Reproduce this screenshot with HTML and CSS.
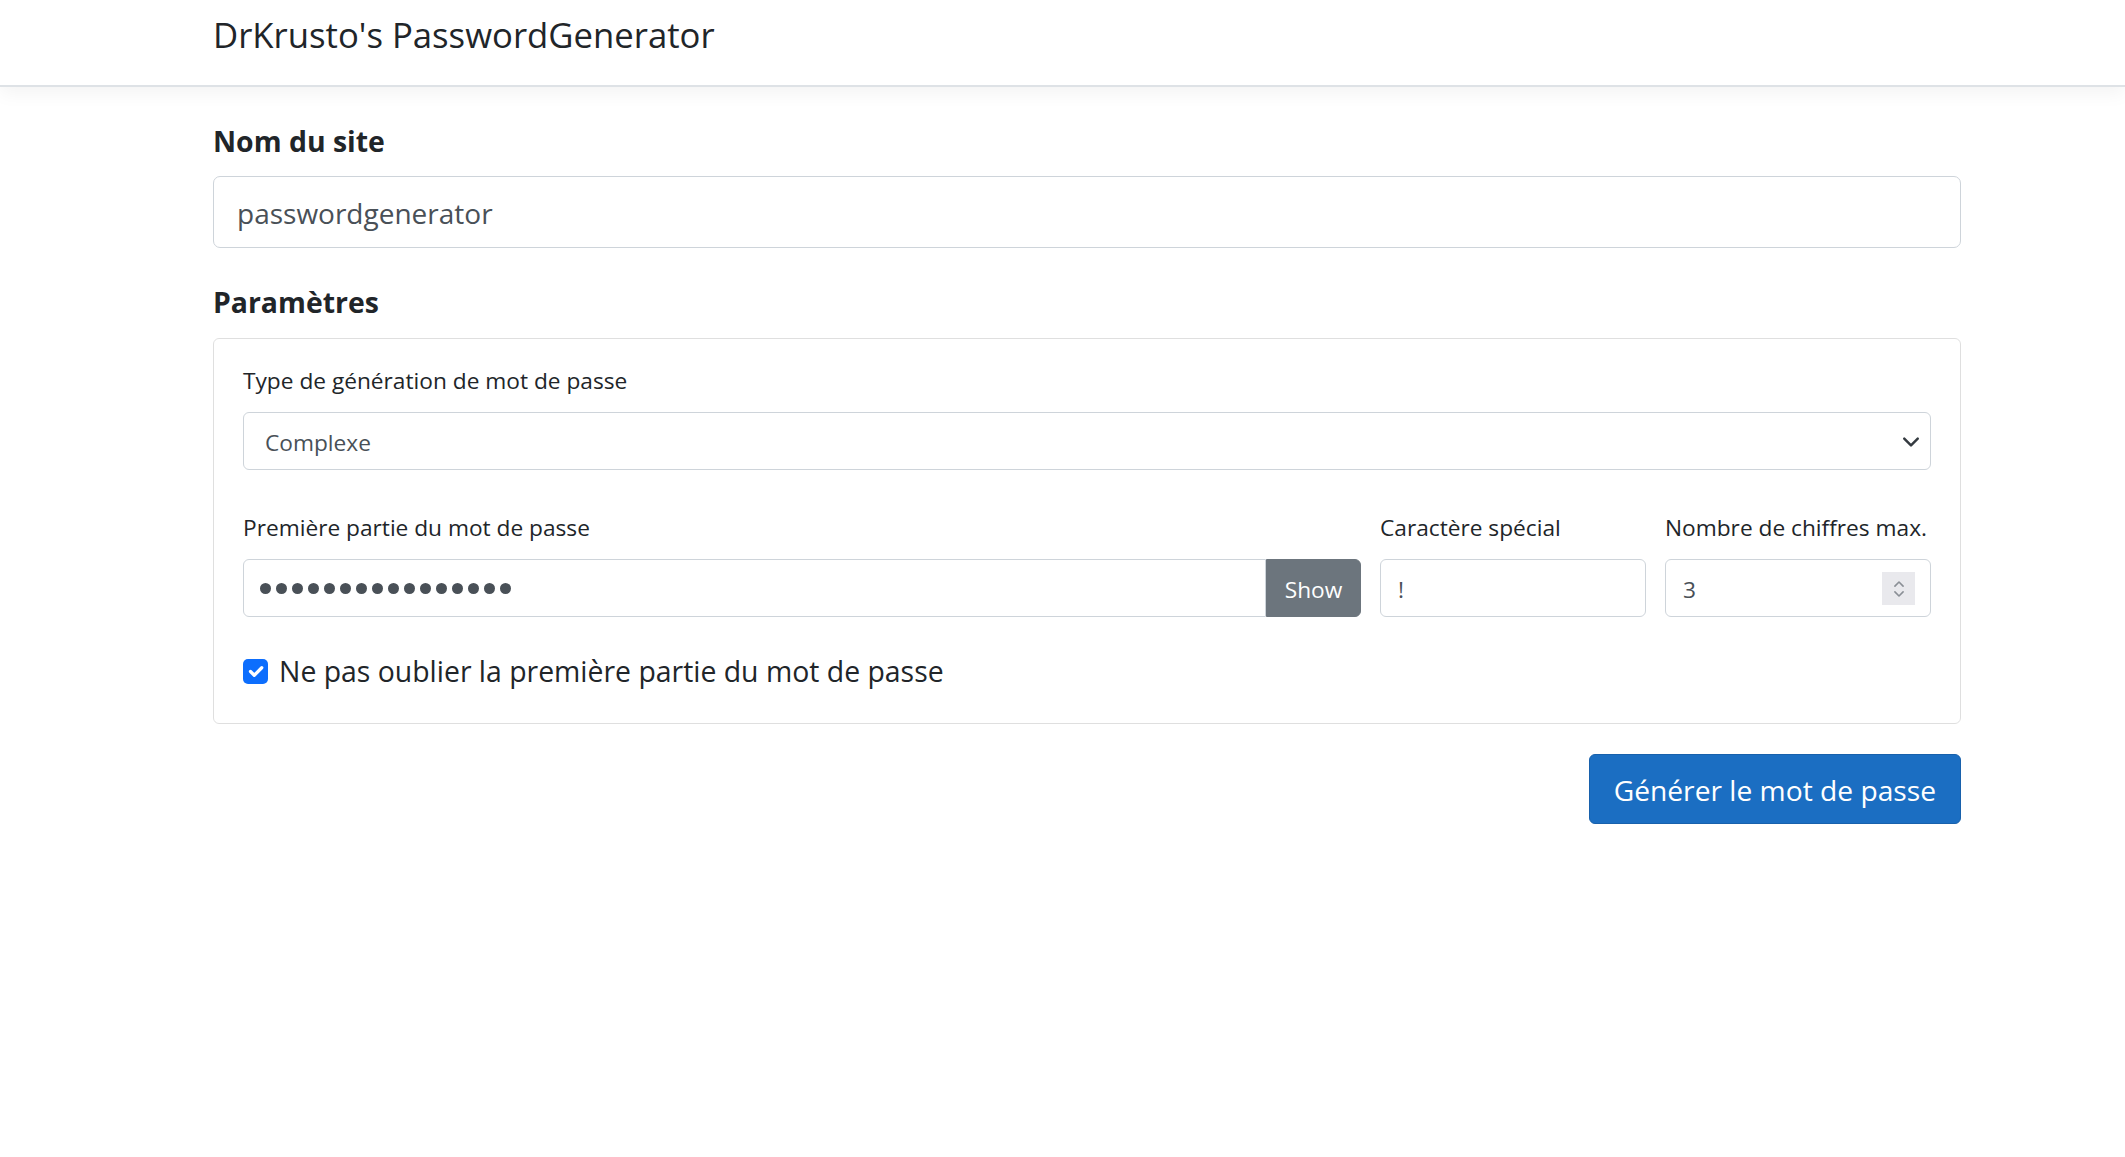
FILE: index.html
```html
<!DOCTYPE html>
<html lang="fr">
<head>
<meta charset="utf-8">
<title>PasswordGenerator</title>
<link rel="stylesheet" href="styles.css">
</head>
<body>
<header class="topbar">
  <div class="brand">DrKrusto's PasswordGenerator</div>
</header>
<main class="page">
  <h5 class="section-title">Nom du site</h5>
  <input class="field field-lg" type="text" value="passwordgenerator">
  <h5 class="section-title section-gap">Paramètres</h5>
  <div class="card">
    <label class="label">Type de génération de mot de passe</label>
    <div class="select-wrap">
      <select class="field field-md select">
        <option>Complexe</option>
      </select>
      <svg class="select-arrow" viewBox="0 0 16 16" width="18" height="18"><path d="M2 5l6 6 6-6" fill="none" stroke="#343a40" stroke-width="2.2" stroke-linecap="round" stroke-linejoin="round"/></svg>
    </div>
    <div class="row-grid">
      <div class="group">
        <label class="label">Première partie du mot de passe</label>
        <div class="input-group">
          <div class="field field-md pw" role="textbox" aria-label="mot de passe">
            <span class="dot"></span><span class="dot"></span><span class="dot"></span><span class="dot"></span>
            <span class="dot"></span><span class="dot"></span><span class="dot"></span><span class="dot"></span>
            <span class="dot"></span><span class="dot"></span><span class="dot"></span><span class="dot"></span>
            <span class="dot"></span><span class="dot"></span><span class="dot"></span><span class="dot"></span>
          </div>
          <button class="btn-show" type="button">Show</button>
        </div>
      </div>
      <div class="group">
        <label class="label">Caractère spécial</label>
        <input class="field field-md" type="text" value="!">
      </div>
      <div class="group">
        <label class="label">Nombre de chiffres max.</label>
        <div class="num-wrap">
          <input class="field field-md" type="text" value="3">
          <span class="spinner"><svg viewBox="0 0 12 20" width="14" height="24"><path d="M2.5 7.5L6 4l3.5 3.5M2.5 12.5L6 16l3.5-3.5" fill="none" stroke="#8a8f96" stroke-width="1.4" stroke-linecap="round" stroke-linejoin="round"/></svg></span>
        </div>
      </div>
    </div>
    <div class="check-row">
      <span class="check"><svg viewBox="0 0 20 20" width="25" height="25"><path d="M6 10l3 3 6-6" fill="none" stroke="#fff" stroke-width="2.6" stroke-linecap="round" stroke-linejoin="round"/></svg></span>
      <span class="check-label">Ne pas oublier la première partie du mot de passe</span>
    </div>
  </div>
  <div class="actions">
    <button class="btn-primary" type="button">Générer le mot de passe</button>
  </div>
</main>
</body>
</html>
```

FILE: styles.css
```css
* { box-sizing: border-box; }
html, body { margin: 0; padding: 0; background: #fff; }
body {
  font-family: "Open Sans", "Noto Sans", sans-serif;
  color: #212529;
  font-size: 22.7px;
  line-height: 1.5;
}
.topbar {
  height: 87px;
  border-bottom: 2px solid #dee2e6;
  box-shadow: 0 6px 18px rgba(0,0,0,.05);
  padding: 12px 0 0 213px;
}
.brand { font-size: 34.7px; line-height: 45px; }
.page { width: 1748px; margin-left: 213px; padding-top: 36px; }
.section-title { margin: 0 0 17px; font-size: 28.4px; line-height: 36px; font-weight: 700; }
.section-gap { margin-top: 36px; }
.field {
  display: block;
  width: 100%;
  border: 1px solid #ced4da;
  border-radius: 6px;
  color: #495057;
  font-family: inherit;
  background: #fff;
  outline: none;
  margin: 0;
}
.field-lg { height: 72px; font-size: 28px; padding: 2px 23px 0; border-radius: 7px; }
.field-md { height: 58px; font-size: 22.7px; padding: 2px 17px 0; }
.card {
  margin-top: 18px;
  border: 1px solid rgba(0,0,0,.125);
  border-radius: 6px;
  padding: 24px 29px 29px;
}
.label { display: block; line-height: 36px; margin-bottom: 13px; white-space: nowrap; }
.select-wrap { position: relative; }
.select { appearance: none; -webkit-appearance: none; padding-left: 21px; }
.select-arrow { position: absolute; right: 11px; top: 21px; }
.row-grid {
  margin-top: 40px;
  display: grid;
  grid-template-columns: 1fr 266px 266px;
  column-gap: 19px;
}
.input-group { display: flex; }
.input-group .pw {
  flex: 1;
  border-radius: 6px 0 0 6px;
  display: flex;
  align-items: center;
  gap: 5px;
  padding: 0 0 0 16px;
}
.dot { width: 11px; height: 11px; border-radius: 50%; background: #495057; }
.btn-show {
  width: 95px;
  height: 58px;
  border: 1px solid #6c757d;
  background: #6c757d;
  color: #fff;
  font-family: inherit;
  font-size: 22.7px;
  border-radius: 0 6px 6px 0;
  padding: 2px 0 0;
}
.num-wrap { position: relative; }
.spinner {
  position: absolute;
  right: 16px;
  top: 13px;
  width: 33px;
  height: 33px;
  background: #e9e9ed;
  display: flex;
  align-items: center;
  justify-content: center;
}
.check-row { display: flex; align-items: center; margin-top: 32px; height: 45px; }
.check {
  width: 25px; height: 25px;
  background: #0d6efd;
  border-radius: 5px;
  display: flex; align-items: center; justify-content: center;
  margin-right: 11px;
}
.check-label { font-size: 28.4px; }
.actions { display: flex; justify-content: flex-end; margin-top: 30px; }
.btn-primary {
  height: 70px;
  padding: 2px 24px 0;
  background: #1b6ec2;
  border: 1px solid #1861ac;
  color: #fff;
  font-family: inherit;
  font-size: 28.2px;
  border-radius: 6px;
}
```
